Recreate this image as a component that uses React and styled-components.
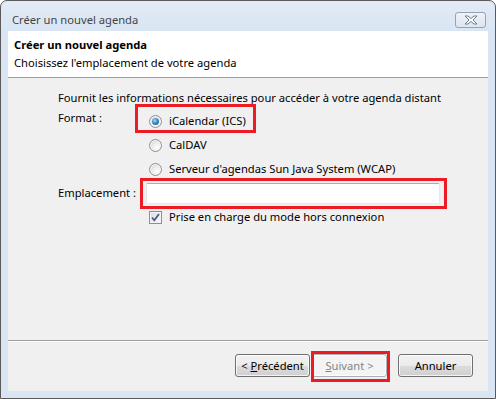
import React from "react"
import styled, { createGlobalStyle } from "styled-components"

const GlobalStyle = createGlobalStyle`
  html, body { margin: 0; padding: 0; background: #fff; }
  body {
    font-family: "Noto Sans", "Open Sans", sans-serif;
    font-size: 11.2px;
    color: #000;
  }
  * { box-sizing: border-box; }
`

const Window = styled.div`
  width: 496px;
  height: 399px;
  border: 1px solid #5a5a5a;
  border-radius: 7px 7px 0 0;
  background: linear-gradient(#e2ebf6, #dae5f3 30px, #dae5f3);
  padding: 0 7px 7px 7px;
  display: flex;
  flex-direction: column;
`

const TitleBar = styled.div`
  height: 30px;
  display: flex;
  align-items: flex-start;
  justify-content: space-between;
  padding: 11px 2px 0 4px;
`

const TitleText = styled.span`
  line-height: 16px;
  color: #444;
`

const CloseButton = styled.div`
  width: 31px;
  height: 16px;
  border: 1px solid #95a3b5;
  border-radius: 3px;
  background: linear-gradient(#eef3f9, #dce5f0);
  display: flex;
  align-items: center;
  justify-content: center;
`

const Client = styled.div`
  height: 360px;
  background: #f0f0f0;
  display: flex;
  flex-direction: column;
`

const Header = styled.div`
  height: 47px;
  background: #fff;
  border-bottom: 1px solid #a0a0a0;
  padding: 5px 6px 0;
`

const HeaderTitle = styled.div`
  font-weight: bold;
  line-height: 18px;
`

const HeaderText = styled.div`
  line-height: 18px;
`

const Body = styled.div`
  flex: 1;
  padding: 12px 0 0 50px;
`

const Intro = styled.div`
  line-height: 16px;
`

const Form = styled.div`
  margin-top: 3px;
  display: grid;
  grid-template-columns: 88px 1fr;
  grid-auto-rows: 24px;
`

const Label = styled.div`
  grid-column: 1;
  line-height: 16px;
  white-space: nowrap;
  align-self: ${p => (p.$top ? "start" : "center")};
  padding-top: ${p => (p.$top ? "1px" : "0")};
`

const Cell = styled.div`
  grid-column: 2;
  display: flex;
  align-items: center;
`

const Option = styled.span`
  display: inline-flex;
  align-items: center;
  gap: 7px;
  padding-left: 3px;
  line-height: 16px;
`

const Marked = styled.span`
  position: relative;
  display: inline-flex;
  align-items: center;
  &::after {
    content: "";
    position: absolute;
    top: ${p => p.$t}px;
    right: ${p => p.$r}px;
    bottom: ${p => p.$b}px;
    left: ${p => p.$l}px;
    border: 3px solid #ed1c24;
    pointer-events: none;
  }
`

const Radio = styled.span`
  position: relative;
  width: 13px;
  height: 13px;
  border-radius: 50%;
  border: 1px solid #8f8f8f;
  background: radial-gradient(circle at 65% 70%, #ffffff 0%, #eeeeee 40%, #d0d0d0 100%);
  box-shadow: inset 0 0 0 1px #f6f6f6;
  flex: none;
  &::after {
    content: "";
    display: ${p => (p.$checked ? "block" : "none")};
    position: absolute;
    left: 2px;
    top: 2px;
    width: 7px;
    height: 7px;
    border-radius: 50%;
    background: radial-gradient(circle at 40% 35%, #a9dcf6 0%, #3a8cc9 45%, #1c4f85 100%);
  }
`

const Checkbox = styled.span`
  width: 13px;
  height: 13px;
  border: 1px solid #8f8f8f;
  background: linear-gradient(135deg, #dcdcdc, #fbfbfb);
  box-shadow: inset 0 0 0 1px #f4f4f4;
  display: flex;
  align-items: center;
  justify-content: center;
  flex: none;
`

const TextInput = styled.input`
  width: 294px;
  height: 21px;
  margin: 0;
  background: #fff;
  border: 1px solid #e3e9ef;
  border-top-color: #abadb3;
  border-left-color: #e2e3ea;
  border-radius: 2px;
  outline: none;
  font: inherit;
`

const Footer = styled.div`
  height: 51px;
  border-top: 1px solid #a0a0a0;
  box-shadow: inset 0 1px #ffffff;
  display: flex;
  justify-content: flex-end;
  align-items: flex-start;
  padding: 13px 15px 0 0;
`

const Button = styled.button`
  width: 75px;
  height: 23px;
  margin: 0 ${p => p.$gap || 0}px 0 0;
  padding: 0;
  font: inherit;
  border: 1px solid ${p => (p.disabled ? "#adb2b5" : "#707070")};
  border-radius: 3px;
  color: ${p => (p.disabled ? "#838383" : "#000")};
  background: ${p =>
    p.disabled
      ? "#f4f4f4"
      : "linear-gradient(#f2f2f2 0%, #ebebeb 50%, #dddddd 50%, #cfcfcf 100%)"};
  box-shadow: inset 0 0 0 1px rgba(255, 255, 255, 0.75);
  u { text-decoration: underline; }
`

const CloseIcon = () => (
  <svg width="14" height="10" viewBox="0 0 14 10">
    <path
      d="M1 1h3l3 2.5L10 1h3L9 5l4 4h-3L7 6.5 4 9H1l4-4z"
      fill="#fdfdfd"
      stroke="#6f7d90"
      strokeWidth="1"
      strokeLinejoin="round"
    />
  </svg>
)

const CheckMark = () => (
  <svg width="9" height="9" viewBox="0 0 9 9">
    <path d="M1 4.5l2.3 2.8L8 1" fill="none" stroke="#4a5c8c" strokeWidth="1.8" />
  </svg>
)

export default function App() {
  return (
    <>
      <GlobalStyle />
      <Window>
        <TitleBar>
          <TitleText>Créer un nouvel agenda</TitleText>
          <CloseButton>
            <CloseIcon />
          </CloseButton>
        </TitleBar>
        <Client>
          <Header>
            <HeaderTitle>Créer un nouvel agenda</HeaderTitle>
            <HeaderText>Choisissez l'emplacement de votre agenda</HeaderText>
          </Header>
          <Body>
            <Intro>Fournit les informations nécessaires pour accéder à votre agenda distant</Intro>
            <Form>
              <Label $top>Format :</Label>
              <Cell>
                <Marked $t={-9} $r={-10} $b={-4} $l={-11}>
                  <Option>
                    <Radio $checked />
                    iCalendar (ICS)
                  </Option>
                </Marked>
              </Cell>
              <Cell>
                <Option>
                  <Radio />
                  CalDAV
                </Option>
              </Cell>
              <Cell>
                <Option>
                  <Radio />
                  Serveur d'agendas Sun Java System (WCAP)
                </Option>
              </Cell>
              <Label>Emplacement :</Label>
              <Cell>
                <Marked $t={-5} $r={-7} $b={-5} $l={-6}>
                  <TextInput type="text" />
                </Marked>
              </Cell>
              <Cell>
                <Option>
                  <Checkbox>
                    <CheckMark />
                  </Checkbox>
                  Prise en charge du mode hors connexion
                </Option>
              </Cell>
            </Form>
          </Body>
          <Footer>
            <Button $gap={2}>
              &lt; <u>P</u>récédent
            </Button>
            <Marked $t={-3} $r={-3} $b={-5} $l={-1} style={{ marginRight: 11 }}>
              <Button disabled>
                <u>S</u>uivant &gt;
              </Button>
            </Marked>
            <Button>Annuler</Button>
          </Footer>
        </Client>
      </Window>
    </>
  )
}
